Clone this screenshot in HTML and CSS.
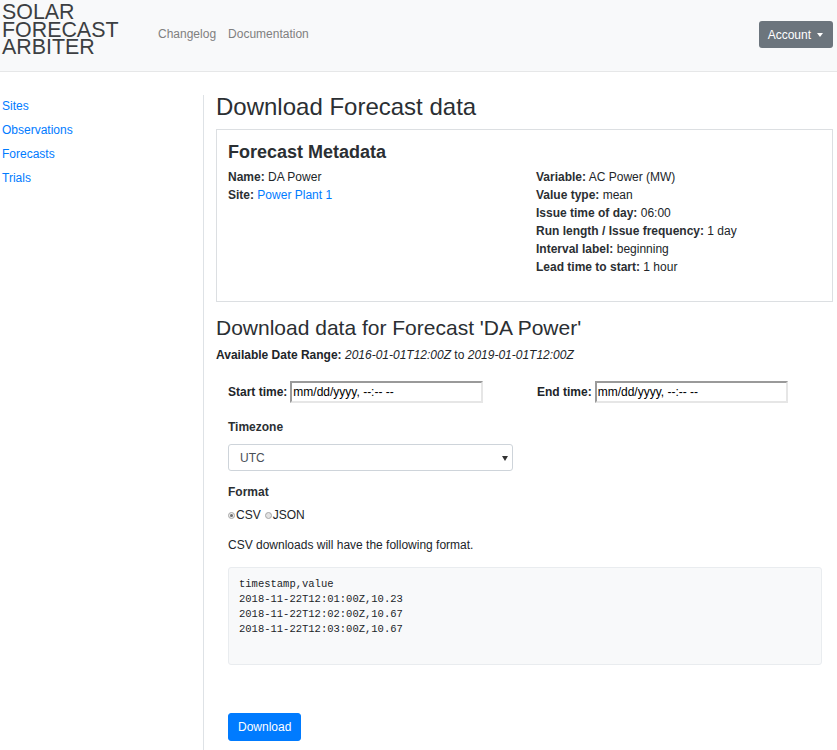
FILE: index.html
```html
<!DOCTYPE html>
<html lang="en">
<head>
<meta charset="utf-8">
<title>Download Forecast data</title>
<link rel="stylesheet" href="styles.css">
</head>
<body>
<nav class="navbar">
  <a class="brand" href="#">SOLAR FORECAST ARBITER</a>
  <ul class="nav-links">
    <li><a href="#">Changelog</a></li>
    <li><a href="#">Documentation</a></li>
  </ul>
  <button class="account-btn" type="button">Account<span class="caret"></span></button>
</nav>
<div class="layout">
  <aside class="sidebar">
    <ul class="side-links">
      <li><a href="#">Sites</a></li>
      <li><a href="#">Observations</a></li>
      <li><a href="#">Forecasts</a></li>
      <li><a href="#">Trials</a></li>
    </ul>
  </aside>
  <main class="main">
    <h2 class="page-title">Download Forecast data</h2>
    <section class="card">
      <h4 class="card-title">Forecast Metadata</h4>
      <div class="meta-grid">
        <ul class="meta-list">
          <li><b>Name:</b> DA Power</li>
          <li><b>Site:</b> <a href="#">Power Plant 1</a></li>
        </ul>
        <ul class="meta-list">
          <li><b>Variable:</b> AC Power (MW)</li>
          <li><b>Value type:</b> mean</li>
          <li><b>Issue time of day:</b> 06:00</li>
          <li><b>Run length / Issue frequency:</b> 1 day</li>
          <li><b>Interval label:</b> beginning</li>
          <li><b>Lead time to start:</b> 1 hour</li>
        </ul>
      </div>
    </section>
    <h3 class="sub-title">Download data for Forecast 'DA Power'</h3>
    <p class="range"><b>Available Date Range:</b> <i>2016-01-01T12:00Z</i> to <i>2019-01-01T12:00Z</i></p>
    <form class="dl-form">
      <div class="time-row">
        <label class="time-field"><b>Start time:</b><input class="time-input" type="text" value="mm/dd/yyyy, --:-- --" readonly></label>
        <label class="time-field"><b>End time:</b><input class="time-input" type="text" value="mm/dd/yyyy, --:-- --" readonly></label>
      </div>
      <div class="field-label tz-label">Timezone</div>
      <div class="select-wrap">
        <select class="tz-select"><option>UTC</option></select>
      </div>
      <div class="field-label fmt-label">Format</div>
      <div class="radios">
        <label class="radio"><span class="dot checked"></span>CSV</label>
        <label class="radio"><span class="dot"></span>JSON</label>
      </div>
      <p class="csv-note">CSV downloads will have the following format.</p>
      <pre class="sample">timestamp,value
2018-11-22T12:01:00Z,10.23
2018-11-22T12:02:00Z,10.67
2018-11-22T12:03:00Z,10.67
</pre>
      <button class="dl-btn" type="button">Download</button>
    </form>
  </main>
</div>
</body>
</html>
```
FILE: styles.css
```css
* { box-sizing: border-box; }
html, body { margin: 0; padding: 0; }
body {
  font-family: "Liberation Sans", Arial, sans-serif;
  font-size: 12px;
  line-height: 18px;
  color: #212529;
  background: #fff;
}
a { color: #007bff; text-decoration: none; }
ul { list-style: none; margin: 0; padding: 0; }

.navbar {
  height: 72px;
  background: #f8f9fa;
  border-bottom: 1px solid #e6e7e8;
  display: flex;
  align-items: flex-start;
  padding: 0 4px 0 2px;
}
.brand {
  display: block;
  width: 124px;
  margin-top: 4px;
  font-size: 21.4px;
  line-height: 17.7px;
  color: #3c3f42;
}
.nav-links {
  display: flex;
  margin-left: 26px;
  margin-top: 25px;
}
.nav-links a {
  display: block;
  padding: 0 6px;
  color: #808080;
  line-height: 18px;
}
.account-btn {
  margin-left: auto;
  margin-top: 21px;
  height: 27px;
  padding: 0 10px 0 9px;
  background: #6c757d;
  color: #fff;
  border: 0;
  border-radius: 3px;
  font-family: "Liberation Sans", Arial, sans-serif;
  font-size: 12px;
  display: flex;
  align-items: center;
}
.caret {
  display: inline-block;
  margin-left: 6px;
  border-top: 4px solid #fff;
  border-left: 3.5px solid transparent;
  border-right: 3.5px solid transparent;
  margin-top: 1px;
}

.layout {
  display: flex;
  margin-top: 23px;
  min-height: 655px;
}
.sidebar {
  width: 204px;
  flex: none;
  border-right: 1px solid #dee2e6;
  padding-left: 2px;
}
.side-links { margin-top: -1px; }
.side-links a { display: block; line-height: 24px; }

.main {
  flex: 1;
  padding: 0 4px 0 12px;
}
.page-title {
  margin: 0 0 10px;
  font-size: 24px;
  font-weight: 400;
  line-height: 24px;
  color: #2b2f33;
}
.card {
  border: 1px solid #dcdfe2;
  padding: 11px 11px 25px 11px;
}
.card-title {
  margin: 0 0 5px;
  font-size: 18px;
  font-weight: 700;
  line-height: 22px;
  color: #2b2f33;
}
.meta-grid {
  display: grid;
  grid-template-columns: 308px 1fr;
}
.meta-list b { color: #2b2f33; }

.sub-title {
  margin: 13px 0 6px;
  font-size: 21px;
  font-weight: 400;
  line-height: 25px;
  color: #2b2f33;
}
.range { margin: 0; }

.dl-form { padding: 0 11px 0 12px; }
.time-row {
  display: grid;
  grid-template-columns: 309px 1fr;
  margin-top: 17px;
  height: 22px;
}
.time-field { display: flex; align-items: center; }
.time-input {
  width: 193px;
  height: 22px;
  margin: 0 0 0 3px;
  padding: 0 1px;
  border-style: solid;
  border-width: 2px;
  border-color: #9a9a9a #e6e6e6 #e6e6e6 #9a9a9a;
  font-family: "Liberation Sans", Arial, sans-serif;
  font-size: 12px;
  color: #000;
  background: #fff;
  outline: none;
}
.field-label { font-weight: 700; color: #2b2f33; }
.tz-label { margin-top: 15px; margin-bottom: 8px; }
.select-wrap {
  position: relative;
  width: 285px;
}
.select-wrap::after {
  content: "";
  position: absolute;
  right: 5px;
  top: 12px;
  border-top: 5px solid #333;
  border-left: 3px solid transparent;
  border-right: 3px solid transparent;
  pointer-events: none;
}
.tz-select {
  display: block;
  width: 100%;
  height: 27px;
  padding: 0 11px;
  border: 1px solid #ced4da;
  border-radius: 3px;
  background: #fff;
  color: #495057;
  font-family: "Liberation Sans", Arial, sans-serif;
  font-size: 12px;
  -webkit-appearance: none;
  appearance: none;
}
.fmt-label { margin-top: 12px; }
.radios { margin-top: 5px; display: flex; }
.radio { display: flex; align-items: center; margin-right: 4px; }
.dot {
  width: 7px;
  height: 7px;
  border-radius: 50%;
  border: 1px solid #a8a8a8;
  background: #e2e2e2;
  margin-right: 1px;
  margin-top: 1px;
  position: relative;
}
.dot.checked { background: #ececec; }
.dot.checked::after {
  content: "";
  position: absolute;
  left: 1px;
  top: 1px;
  width: 3px;
  height: 3px;
  border-radius: 50%;
  background: #6e6e6e;
}
.csv-note { margin: 12px 0 0; }
.sample {
  margin: 13px 0 0;
  padding: 9px 10px 28px;
  background: #f8f9fa;
  border: 1px solid #e9ecef;
  border-radius: 3px;
  font-family: "Liberation Mono", "DejaVu Sans Mono", monospace;
  font-size: 10.5px;
  line-height: 15px;
  color: #212529;
  height: 98px;
  overflow: hidden;
}
.dl-btn {
  display: block;
  margin-top: 48px;
  height: 28px;
  padding: 0 9px;
  border: 1px solid #007bff;
  border-radius: 3px;
  background: #007bff;
  color: #fff;
  font-family: "Liberation Sans", Arial, sans-serif;
  font-size: 12px;
  line-height: 18px;
}
```
